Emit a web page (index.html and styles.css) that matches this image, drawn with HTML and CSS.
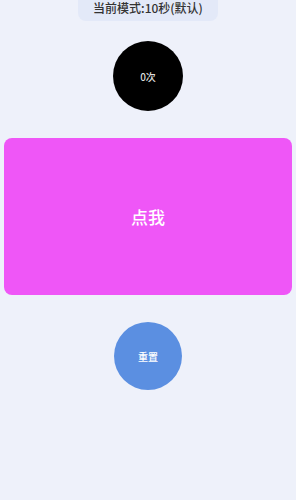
FILE: index.html
```html
<!DOCTYPE html>
<html lang="zh">
<head>
  <meta charset="UTF-8">
  <meta name="viewport" content="width=device-width, initial-scale=1.0">
  <title>点我</title>
  <link rel="stylesheet" href="styles.css">
</head>
<body>
  <div class="page">
    <div class="mode">当前模式:10秒(默认)</div>

    <div class="counter">0次</div>

    <div class="tap-area">点我</div>

    <div class="reset">重置</div>
  </div>
</body>
</html>
```

FILE: styles.css
```css
html, body {
  margin: 0;
  padding: 0;
}

body {
  background-color: #eef1fa;
  font-family: "Noto Sans CJK SC", "Noto Sans", sans-serif;
  width: 296px;
  height: 500px;
  overflow: hidden;
}

.page {
  display: flex;
  flex-direction: column;
  align-items: center;
  padding: 0 4px;
}

.mode {
  height: 21px;
  line-height: 15px;
  padding: 0 15px;
  background-color: #e3e9f8;
  border-radius: 0 0 8px 8px;
  color: #333;
  font-size: 12px;
  font-weight: 500;
}

.counter {
  margin-top: 20px;
  width: 70px;
  height: 70px;
  border-radius: 50%;
  background-color: #000;
  color: #ddd;
  font-size: 10px;
  font-weight: 500;
  display: flex;
  align-items: center;
  justify-content: center;
}

.tap-area {
  margin-top: 27px;
  width: 100%;
  height: 157px;
  border-radius: 8px;
  background-color: #ef56f7;
  color: #fff;
  font-size: 17px;
  font-weight: 500;
  display: flex;
  align-items: center;
  justify-content: center;
}

.reset {
  margin-top: 27px;
  width: 68px;
  height: 68px;
  border-radius: 50%;
  background-color: #5b8fe1;
  color: #fff;
  font-size: 10px;
  font-weight: 500;
  display: flex;
  align-items: center;
  justify-content: center;
}
```
